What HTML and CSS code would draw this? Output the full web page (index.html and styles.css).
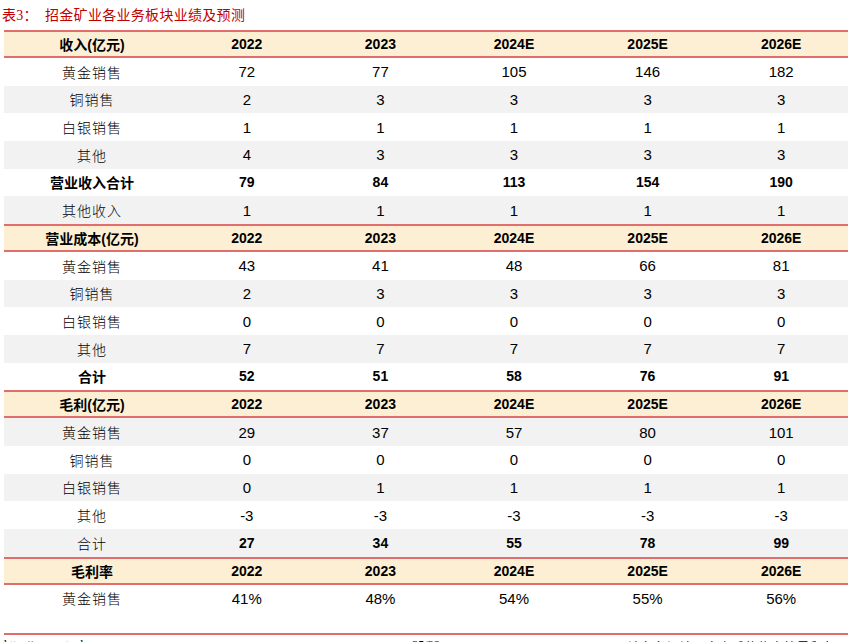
FILE: index.html
```html
<!DOCTYPE html>
<html lang="zh">
<head>
<meta charset="utf-8">
<title>表3 招金矿业各业务板块业绩及预测</title>
<link rel="stylesheet" href="styles.css">
</head>
<body>
<div class="page">
  <div class="caption"><span class="cap-no">表3：</span><span class="cap-text">招金矿业各业务板块业绩及预测</span></div>
  <div class="table">
    <div class="row head"><div class="lbl">收入(亿元)</div><div>2022</div><div>2023</div><div>2024E</div><div>2025E</div><div>2026E</div></div>
    <div class="row"><div class="lbl">黄金销售</div><div>72</div><div>77</div><div>105</div><div>146</div><div>182</div></div>
    <div class="row alt"><div class="lbl">铜销售</div><div>2</div><div>3</div><div>3</div><div>3</div><div>3</div></div>
    <div class="row"><div class="lbl">白银销售</div><div>1</div><div>1</div><div>1</div><div>1</div><div>1</div></div>
    <div class="row alt"><div class="lbl">其他</div><div>4</div><div>3</div><div>3</div><div>3</div><div>3</div></div>
    <div class="row bold"><div class="lbl">营业收入合计</div><div>79</div><div>84</div><div>113</div><div>154</div><div>190</div></div>
    <div class="row alt"><div class="lbl">其他收入</div><div>1</div><div>1</div><div>1</div><div>1</div><div>1</div></div>

    <div class="row head"><div class="lbl">营业成本(亿元)</div><div>2022</div><div>2023</div><div>2024E</div><div>2025E</div><div>2026E</div></div>
    <div class="row"><div class="lbl">黄金销售</div><div>43</div><div>41</div><div>48</div><div>66</div><div>81</div></div>
    <div class="row alt"><div class="lbl">铜销售</div><div>2</div><div>3</div><div>3</div><div>3</div><div>3</div></div>
    <div class="row"><div class="lbl">白银销售</div><div>0</div><div>0</div><div>0</div><div>0</div><div>0</div></div>
    <div class="row alt"><div class="lbl">其他</div><div>7</div><div>7</div><div>7</div><div>7</div><div>7</div></div>
    <div class="row bold"><div class="lbl">合计</div><div>52</div><div>51</div><div>58</div><div>76</div><div>91</div></div>

    <div class="row head"><div class="lbl">毛利(亿元)</div><div>2022</div><div>2023</div><div>2024E</div><div>2025E</div><div>2026E</div></div>
    <div class="row alt"><div class="lbl">黄金销售</div><div>29</div><div>37</div><div>57</div><div>80</div><div>101</div></div>
    <div class="row"><div class="lbl">铜销售</div><div>0</div><div>0</div><div>0</div><div>0</div><div>0</div></div>
    <div class="row alt"><div class="lbl">白银销售</div><div>0</div><div>1</div><div>1</div><div>1</div><div>1</div></div>
    <div class="row"><div class="lbl">其他</div><div>-3</div><div>-3</div><div>-3</div><div>-3</div><div>-3</div></div>
    <div class="row alt bold-num"><div class="lbl">合计</div><div>27</div><div>34</div><div>55</div><div>78</div><div>99</div></div>

    <div class="row head"><div class="lbl">毛利率</div><div>2022</div><div>2023</div><div>2024E</div><div>2025E</div><div>2026E</div></div>
    <div class="row"><div class="lbl">黄金销售</div><div>41%</div><div>48%</div><div>54%</div><div>55%</div><div>56%</div></div>
  </div>
  <div class="footer">
    <span class="f-left">http://www.stocke.com.cn</span>
    <span class="f-mid">35/38</span>
    <span class="f-right">请务必阅读正文之后的信息披露和免责申明</span>
  </div>
</div>
</body>
</html>
```
FILE: styles.css
```css
html, body {
  margin: 0;
  padding: 0;
  background: #ffffff;
}

.page {
  width: 866px;
  height: 642px;
  overflow: hidden;
  font-family: "Liberation Sans", "Noto Sans CJK SC", sans-serif;
  color: #000;
}

.caption {
  height: 30px;
  padding-left: 2px;
  display: flex;
  align-items: center;
  color: #c00000;
  font-family: "Liberation Serif", "Noto Sans CJK SC", serif;
  font-size: 14px;
  letter-spacing: 0.3px;
  box-sizing: border-box;
  padding-bottom: 3px;
}

.cap-no {
  width: 43px;
}

.table {
  margin-left: 4px;
  width: 844px;
}

.row {
  display: grid;
  grid-template-columns: 176px repeat(5, 1fr);
  height: 27.67px;
  align-items: center;
  font-size: 15px;
}

.row > div {
  text-align: center;
}

.lbl {
  font-size: 14px;
  letter-spacing: 1px;
  font-weight: 300;
}

.alt {
  background: #f2f2f2;
}

.head {
  height: 28px;
  background: #fdefd3;
  border-top: 2px solid #e26d6d;
  border-bottom: 2px solid #e26d6d;
  box-sizing: border-box;
  font-weight: 700;
  font-size: 14px;
}

.head .lbl,
.bold .lbl {
  font-weight: 700;
  letter-spacing: 0;
}

.bold {
  font-weight: 700;
  font-size: 14px;
}

.bold-num > div:not(.lbl) {
  font-weight: 700;
  font-size: 14px;
}

.footer {
  margin-top: 21px;
  margin-left: 4px;
  width: 844px;
  border-top: 2px solid #e26d6d;
  display: flex;
  justify-content: space-between;
  align-items: flex-start;
  font-size: 12px;
  padding-top: 3px;
  font-family: "Liberation Serif", "Noto Sans CJK SC", serif;
}

.f-left {
  width: 300px;
}

.f-mid {
  width: 100px;
  text-align: center;
  margin-right: 80px;
}

.f-right {
  width: 220px;
  letter-spacing: 1px;
}
```
